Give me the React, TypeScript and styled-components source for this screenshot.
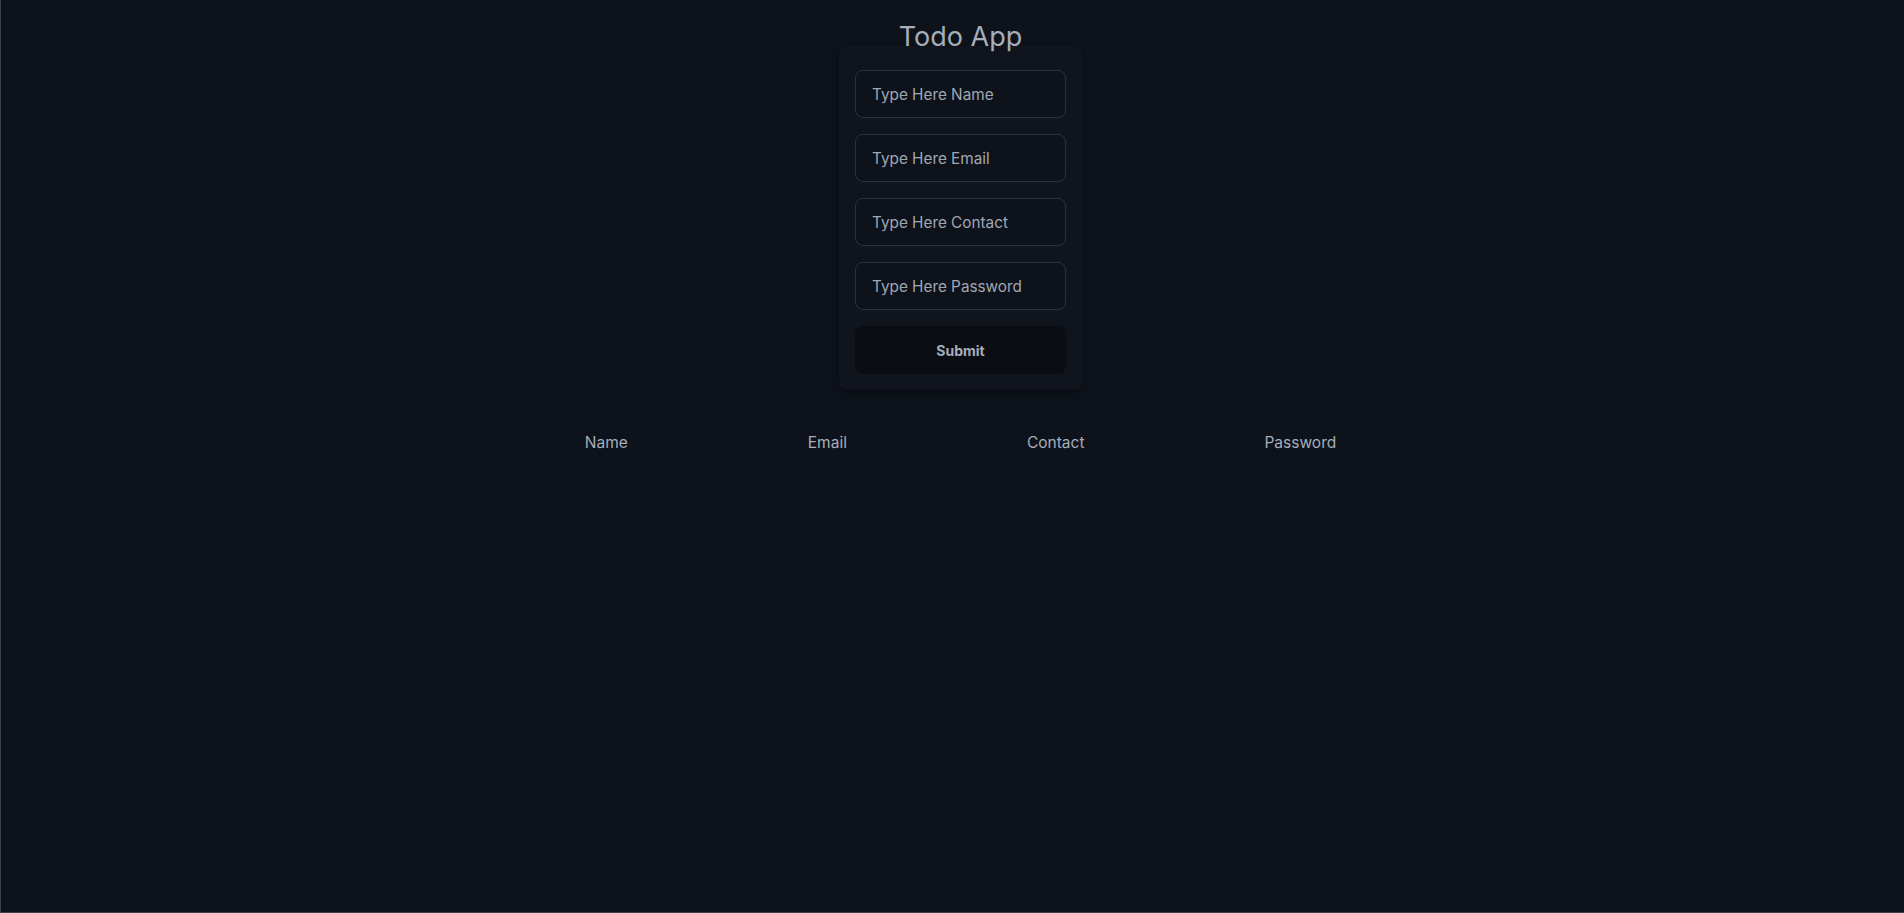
import React from "react";
import styled, { createGlobalStyle } from "styled-components";

const GlobalStyle = createGlobalStyle`
  html, body {
    margin: 0;
    padding: 0;
    background: #0e121a;
    overflow: hidden;
  }
  body {
    font-family: Inter, "Noto Sans", "Liberation Sans", sans-serif;
    color: #a6adbb;
  }
  * { box-sizing: border-box; }
`;

const Page = styled.div`
  height: 913px;
  padding-left: 16px;
  background: #0e121a;
  border-left: 1px solid #3b4049;
  border-bottom: 1px solid #3b4049;
  display: flex;
  flex-direction: column;
  align-items: center;
`;

const Title = styled.h1`
  margin: 21px 0 -6px;
  font-size: 27px;
  line-height: 31px;
  font-weight: 400;
  color: #a6adbb;
  position: relative;
  z-index: 1;
`;

const Card = styled.form`
  width: 243px;
  padding: 24px 16px 16px;
  display: flex;
  flex-direction: column;
  gap: 16px;
  background: #10141c;
  border-radius: 8px;
  box-shadow: 0 2px 6px rgba(0, 0, 0, 0.35);
`;

const Input = styled.input`
  height: 48px;
  width: 100%;
  padding: 0 16px;
  border: 1px solid #2c313a;
  border-radius: 8px;
  background: #0e121a;
  color: #a6adbb;
  font-family: inherit;
  font-size: 15.3px;
  outline: none;
  &::placeholder {
    color: #a0a7b4;
  }
`;

const Button = styled.button`
  height: 48px;
  width: 100%;
  border: none;
  border-radius: 8px;
  background: #0a0d12;
  color: #a6adbb;
  font-family: inherit;
  font-size: 14px;
  font-weight: 700;
  cursor: pointer;
`;

const Table = styled.table`
  margin-top: 41px;
  border-collapse: collapse;
`;

const Th = styled.th`
  padding: 0 90px;
  height: 24px;
  line-height: 24px;
  font-size: 15.5px;
  font-weight: 400;
  text-align: left;
  color: #a6adbb;
`;

const fields = ["Name", "Email", "Contact", "Password"];

export default function App() {
  return (
    <>
      <GlobalStyle />
      <Page>
        <Title>Todo App</Title>
        <Card onSubmit={(e) => e.preventDefault()}>
          {fields.map((f) => (
            <Input
              key={f}
              type={f === "Password" ? "password" : "text"}
              placeholder={`Type Here ${f}`}
            />
          ))}
          <Button type="submit">Submit</Button>
        </Card>
        <Table>
          <thead>
            <tr>
              {fields.map((f) => (
                <Th key={f}>{f}</Th>
              ))}
            </tr>
          </thead>
        </Table>
      </Page>
    </>
  );
}
